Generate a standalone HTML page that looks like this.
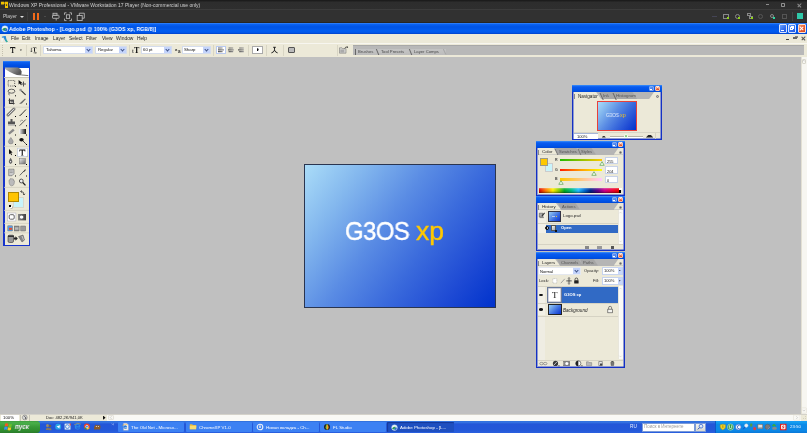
<!DOCTYPE html>
<html><head><meta charset="utf-8">
<style>
*{margin:0;padding:0;box-sizing:border-box}
html,body{width:807px;height:433px;overflow:hidden;background:#c0c0c0;font-family:"Liberation Sans",sans-serif}
.a{position:absolute}
.t{position:absolute;white-space:nowrap;line-height:1;will-change:transform}
#vmt{left:0;top:0;width:807px;height:9px;background:linear-gradient(#1c1c1c 0,#1c1c1c 10%,#2d2d2d 22%,#2e2e2e 100%)}
#vmb{left:0;top:9px;width:807px;height:14px;background:linear-gradient(#3c3c3c 0,#3c3c3c 7%,#313131 10%,#313131 90%,#262626 95%)}
#xpt{left:0;top:23px;width:807px;height:11px;background:linear-gradient(#3a8cff 0,#0a62f2 12%,#0054e6 35%,#005cf0 70%,#0058ec 85%,#0040c8 100%)}
#menu{left:0;top:34px;width:807px;height:9px;background:#ece9d8}
#opt{left:0;top:43px;width:807px;height:14px;background:#ece9d8}
#ws{left:0;top:57px;width:801px;height:357px;background:#c0c0c0}
#vsb{left:801px;top:57px;width:6px;height:357px;background:#f4f3ee}
#status{left:0;top:414px;width:807px;height:7px;background:#ece9d8}
#task{left:0;top:421px;width:807px;height:12px;background:linear-gradient(#2a6ad8 0,#3a7ae4 8%,#2456d8 25%,#2358d8 75%,#2a60e0 100%)}
.vm{color:#cfcfcf;font-size:5px}
.mn{color:#1a1a1a;font-size:4.9px;top:36.7px}
.ob{font-size:4.3px;color:#111}
.dd{position:absolute;background:#fff;border:0.6px solid #d4dcec;height:8px}
.dda{position:absolute;background:#c4d4fb;width:6.6px;height:6.8px;top:0;right:0}
.dda:after{content:"";position:absolute;left:2px;top:1.6px;width:2px;height:2px;border-right:1.1px solid #3d5185;border-bottom:1.1px solid #3d5185;transform:rotate(45deg)}
.sep{position:absolute;top:44.5px;width:0.8px;height:11.5px;background:#d8d5c4}
.pal{position:absolute;background:#ece9d8;border:1px solid #0831d9;border-top:none}
.ptb{position:absolute;left:-1px;right:-1px;top:0;height:7px;background:linear-gradient(#3b8cf6 0,#0058ee 25%,#0052e6 70%,#0046d0 100%)}
.pbt{position:absolute;top:1px;width:5px;height:5px;border:1px solid #fff;border-radius:1px}
.tabs{position:absolute;left:1px;right:1px;height:6px;background:#b4b4b4}
.tab{position:absolute;top:0;height:6px;font-size:4px;line-height:6px;color:#333;padding-left:2px}
.tab.on{background:#ece9d8;color:#000}
.task{position:absolute;top:422px;height:10px;border-radius:1px;background:#3c81f3;color:#fff;font-size:4.4px;line-height:12.3px;padding-left:13px;white-space:nowrap;overflow:hidden;will-change:transform}
</style></head><body>
<div id="vmt" class="a"></div>
<div id="vmb" class="a"></div>
<div id="xpt" class="a"></div>
<div id="menu" class="a"></div>
<div id="opt" class="a"></div>
<div class="a" style="left:0;top:42.6px;width:807px;height:0.8px;background:#f7f6f0"></div>
<div id="ws" class="a"></div>
<div id="vsb" class="a"></div>
<div id="status" class="a"></div>
<div id="task" class="a"></div>
<!-- VMware title -->
<svg class="a" style="left:0;top:0" width="9" height="9" viewBox="0 0 9 9"><path d="M1 1.8h3v2.6h-3z M3.8 2.6h1.5v1h-1.5z M5 1.8h3v6.2h-3z" fill="#f0c000"/><rect x="5.9" y="4.3" width="1.2" height="1.6" fill="#3a3a20"/></svg>
<div class="t vm" style="left:9px;top:2.5px">Windows XP Professional - VMware Workstation 17 Player (Non-commercial use only)</div>
<div class="a" style="left:765.5px;top:4.3px;width:3px;height:0.8px;background:#8c8c8c"></div>
<div class="a" style="left:781px;top:3px;width:4px;height:4px;border:0.8px solid #909090;border-radius:0.8px"></div>
<div class="a" style="left:796.5px;top:4.5px;width:4.5px;height:0.7px;background:#8c8c8c;transform:rotate(45deg)"></div>
<div class="a" style="left:796.5px;top:4.5px;width:4.5px;height:0.7px;background:#8c8c8c;transform:rotate(-45deg)"></div>
<!-- VMware toolbar -->
<div class="t vm" style="left:3px;top:14.6px;font-size:4.9px">Player</div>
<div class="a" style="left:20px;top:16px;width:0;height:0;border-left:2px solid transparent;border-right:2px solid transparent;border-top:2px solid #ddd"></div>
<div class="a" style="left:27px;top:12px;width:1px;height:9px;background:#3d3d3d"></div>
<div class="a" style="left:33px;top:13px;width:2px;height:7px;background:#f26a1a"></div>
<div class="a" style="left:37px;top:13px;width:2px;height:7px;background:#f26a1a"></div>
<div class="a" style="left:44px;top:15.5px;width:0;height:0;border-left:1.5px solid transparent;border-right:1.5px solid transparent;border-top:1.5px solid #666"></div>
<svg class="a" style="left:50px;top:11px" width="40" height="12" viewBox="0 0 40 12">
<g fill="none" stroke="#b4b4b4" stroke-width="0.9">
<rect x="3" y="2.3" width="4" height="2"/>
<rect x="2.5" y="4.3" width="6.5" height="3" rx="0.5"/>
<path d="M6.2 7.3v2.2"/>
<path d="M14.5 3.8v-2h2 M19.5 1.8h2v2 M21.5 7.6v2h-2 M16.5 9.6h-2v-2"/>
<rect x="16.4" y="3.8" width="3.2" height="3.6"/>
<path d="M29.3 4.5v-2.3h5v5h-2.2"/>
<rect x="27.2" y="4.5" width="5" height="5"/>
</g></svg>
<!-- VMware toolbar right icons -->
<div class="a" style="left:712px;top:16px;width:5px;height:1px;background:#445"></div>
<div class="a" style="left:723px;top:13.5px;width:6px;height:5px;border:1px solid #888"></div>
<div class="a" style="left:727px;top:17px;width:2px;height:2px;background:#8ed11a"></div>
<div class="a" style="left:734.5px;top:13.5px;width:5px;height:5px;border:1px solid #888;border-radius:50%"></div>
<div class="a" style="left:738px;top:17px;width:2px;height:2px;background:#8ed11a"></div>
<div class="a" style="left:747px;top:13px;width:4px;height:3px;border:1px solid #888"></div>
<div class="a" style="left:749px;top:15.5px;width:4px;height:3px;border:1px solid #888"></div>
<div class="a" style="left:751px;top:17px;width:2px;height:2px;background:#8ed11a"></div>
<div class="a" style="left:758px;top:13.5px;width:5px;height:5px;border:1px solid #555;border-radius:50%"></div>
<div class="a" style="left:770px;top:13.5px;width:4px;height:4px;border:1px solid #888;border-radius:50%"></div>
<div class="a" style="left:772.5px;top:17px;width:2px;height:2px;background:#2cd6a0"></div>
<div class="a" style="left:782px;top:13.5px;width:5px;height:5px;border:1px solid #555"></div>
<div class="a" style="left:792px;top:12px;width:1px;height:9px;background:#444"></div>
<div class="a" style="left:797px;top:13px;width:6px;height:6px;background:#2fc8a8"></div>
<!-- XP title -->
<svg class="a" style="left:0.5px;top:24.8px" width="8" height="8" viewBox="0 0 8 8"><circle cx="3.9" cy="3.8" r="3.1" fill="#e8f2f8" stroke="#a8c8e0" stroke-width="0.4"/><path d="M1.2 4.6q1.6-2.6 4.6-1.4-1.4 0.2-2.2 2.8-1.2-0.3-2.4-1.4z" fill="#2a9a5a"/><path d="M3.4 5.9q0.9-2.4 2.6-2.6 0.8 1.6-0.4 3z" fill="#2a6ac8"/></svg>
<div class="t" style="left:9px;top:26.6px;font-size:5.9px;font-weight:bold;color:#fff;letter-spacing:0.12px;transform:scaleX(0.875);transform-origin:0 0">Adobe Photoshop - [Logo.psd @ 100% (G3OS xp, RGB/8)]</div>
<div class="a" style="left:778.5px;top:24.3px;width:8.3px;height:8.5px;border:0.6px solid #d8e4ff;border-radius:1px;background:linear-gradient(135deg,#6aa4ff,#2f6cf0 60%,#2258e0)"></div>
<div class="a" style="left:781px;top:29.8px;width:3px;height:1px;background:#fff"></div>
<div class="a" style="left:788px;top:24.3px;width:8.3px;height:8.5px;border:0.6px solid #d8e4ff;border-radius:1px;background:linear-gradient(135deg,#6aa4ff,#2f6cf0 60%,#2258e0)"></div>
<div class="a" style="left:790.3px;top:27px;width:3px;height:3px;border:0.8px solid #fff"></div>
<div class="a" style="left:791.3px;top:26px;width:3px;height:3px;border-top:0.8px solid #fff;border-right:0.8px solid #fff"></div>
<div class="a" style="left:797.5px;top:24.3px;width:8.5px;height:8.5px;border:0.6px solid #ffe0d0;border-radius:1px;background:linear-gradient(135deg,#f39a70,#e85a30 55%,#d84a20)"></div>
<div class="a" style="left:799.2px;top:28.2px;width:5.2px;height:1px;background:#fff;transform:rotate(45deg)"></div>
<div class="a" style="left:799.2px;top:28.2px;width:5.2px;height:1px;background:#fff;transform:rotate(-45deg)"></div>
<!-- menu -->
<svg class="a" style="left:0;top:34px" width="10" height="9" viewBox="0 0 10 9"><path d="M1.8 2.8q1.5-1 4-0.8l0.6 3.2 1.4 2.6-1.6 0.4-1.6-2.4-1-2.2-1.6 0.2z" fill="#2a8ad8"/><path d="M5.2 4.6l1.2 1.4 1.3 1.8-1.3 0.4z" fill="#3ac08a"/><path d="M1.6 4.2l1.4 0.4-0.6 3.2h-1z" fill="#f4f8fc"/></svg>
<div class="t mn" style="left:11px">File</div>
<div class="t mn" style="left:22px">Edit</div>
<div class="t mn" style="left:35px">Image</div>
<div class="t mn" style="left:53px">Layer</div>
<div class="t mn" style="left:69px">Select</div>
<div class="t mn" style="left:86px">Filter</div>
<div class="t mn" style="left:101.5px">View</div>
<div class="t mn" style="left:116px">Window</div>
<div class="t mn" style="left:137px">Help</div>
<div class="a" style="left:786px;top:39.2px;width:3px;height:0.9px;background:#444"></div>
<div class="a" style="left:793.3px;top:36.5px;width:3.5px;height:2.7px;border:0.6px solid #666;border-top-width:0.9px"></div>
<div class="a" style="left:794.5px;top:35.7px;width:3px;height:2.5px;border-top:0.6px solid #888;border-right:0.6px solid #888"></div>
<div class="a" style="left:800.8px;top:37.8px;width:4.6px;height:0.8px;background:#555;transform:rotate(45deg)"></div>
<div class="a" style="left:800.8px;top:37.8px;width:4.6px;height:0.8px;background:#555;transform:rotate(-45deg)"></div>
<!-- options bar -->
<div class="a" style="left:2px;top:44.5px;width:1px;height:11.5px;border-left:0.8px dotted #c4c0ae"></div>
<svg class="a" style="left:8px;top:45px" width="32" height="10" viewBox="8 45 32 10">
<path d="M10.1 47.1h5.2v1.6h-0.5l-0.3-0.8h-1.35v4.5l0.7 0.25v0.4h-2.4v-0.4l0.7-0.25v-4.5h-1.35l-0.3 0.8h-0.4z" fill="#1a1a1a"/>
<path d="M19.9 49.5h2l-1 1.5z" fill="#333"/>
<path d="M32.8 47.5h3.6v1.1h-0.3l-0.2-0.5h-0.9v3.6h-1v-3.6h-0.9l-0.2 0.5h-0.1z" fill="#222"/>
<path d="M31.4 47.8v3.8 M30.6 50.9l0.8 1 0.8-1" fill="none" stroke="#222" stroke-width="0.6"/>
<path d="M33.5 52.8h2.6 M35.6 52.2l0.8 0.6-0.8 0.6" fill="none" stroke="#222" stroke-width="0.6"/>
</svg>
<div class="sep" style="left:26px"></div>
<div class="sep" style="left:40px"></div>
<div class="dd" style="left:43px;top:45.5px;width:49.5px"><span class="t ob" style="left:1.8px;top:1.7px">Tahoma</span><div class="dda"></div></div>
<div class="dd" style="left:95px;top:45.5px;width:32px"><span class="t ob" style="left:1.8px;top:1.7px">Regular</span><div class="dda"></div></div>
<div class="sep" style="left:129px"></div>
<div class="t" style="left:133.8px;top:46.6px;font-family:'Liberation Serif',serif;font-size:8px;color:#111;font-weight:bold">T</div>
<div class="t" style="left:131.8px;top:49px;font-family:'Liberation Serif',serif;font-size:5.2px;color:#444;font-weight:bold">t</div>
<div class="dd" style="left:140.5px;top:45.5px;width:31px"><span class="t ob" style="left:1.8px;top:1.7px">60 pt</span><div class="dda"></div></div>
<div class="t" style="left:174.6px;top:48.4px;font-size:4.2px;color:#333;font-weight:bold">a</div><div class="t" style="left:177.6px;top:49.6px;font-size:4.6px;color:#333;font-weight:bold">a</div>
<div class="dd" style="left:181.5px;top:45.5px;width:29px"><span class="t ob" style="left:1.8px;top:1.7px">Sharp</span><div class="dda"></div></div>
<div class="sep" style="left:212.5px"></div>
<div class="a" style="left:216px;top:46px;width:9.5px;height:8px;border:1px solid #b9c9ef;background:#fff"></div>
<svg class="a" style="left:216px;top:46px" width="30" height="8" viewBox="216 46 30 8">
<defs><linearGradient id="alg" x1="0" y1="0" x2="1" y2="0"><stop offset="0" stop-color="#555"/><stop offset="1" stop-color="#999"/></linearGradient></defs>
<path d="M218 47.4h4.6v1.2h-4.6z M218 49.2h6v1.2h-6z M218 51h4.6v1.3h-4.6z" fill="url(#alg)"/>
<path d="M228.6 47.4h4.6v1.2h-4.6z M228 49.2h5.8v1.2h-5.8z M228.6 51h4.6v1.3h-4.6z" fill="url(#alg)"/>
<path d="M239.2 47.4h4.6v1.2h-4.6z M238 49.2h5.8v1.2h-5.8z M239.2 51h4.6v1.3h-4.6z" fill="url(#alg)"/>
</svg>
<div class="sep" style="left:248px"></div>
<div class="a" style="left:252px;top:46.3px;width:11px;height:7.5px;border:1px solid #aaa;background:#fff"></div>
<div class="a" style="left:257px;top:48px;width:1.8px;height:3px;background:#111;clip-path:polygon(0 0,100% 30%,60% 100%,0 100%)"></div>
<div class="sep" style="left:265.5px"></div>
<svg class="a" style="left:270px;top:46px" width="10" height="8" viewBox="270 46 10 8"><path d="M273.2 47.3h2.6 M274.5 47.3v2.5q0 1.5-1.5 2.3l-1.6 0.8 M274.5 49.8q0 1.5 1.5 2.3l1.6 0.8" fill="none" stroke="#222" stroke-width="1"/></svg>
<div class="sep" style="left:282.5px"></div>
<div class="a" style="left:288px;top:46.5px;width:6.5px;height:6.5px;border:1px solid #555;border-radius:1px;background:#bbb"></div>
<div class="sep" style="left:336.5px"></div>
<svg class="a" style="left:338px;top:45px" width="12" height="10" viewBox="338 45 12 10"><path d="M339.5 47.8h2.5l0.6 0.8h3.4v4.6h-6.5z" fill="#d8d8d4" stroke="#666" stroke-width="0.5"/><path d="M340.3 49.5h4v3.2h-4z" fill="#aaa"/><path d="M344.6 48.3q1.2-2 3-1.2" fill="none" stroke="#222" stroke-width="0.7"/><path d="M347 46.3l1.2 0.9-1.3 0.7z" fill="#222"/></svg>
<!-- palette well -->
<div class="a" style="left:353px;top:45px;width:451px;height:10px;background:#b8b8b8;border-top:1px solid #a8a8a8"></div>
<div class="a" style="left:355px;top:49px;width:0.9px;height:5.5px;background:#666"></div>
<div class="a" style="left:356px;top:48.8px;width:90px;height:5.8px;background:linear-gradient(#c4c4c4,#bcbcbc)"></div>
<div class="t" style="left:358px;top:50.2px;font-size:4.2px;color:#4a4a4a">Brushes</div>
<div class="a" style="left:377px;top:48.8px;width:0.9px;height:5.8px;background:#666;transform:skewX(22deg)"></div>
<div class="t" style="left:380.5px;top:50.2px;font-size:4.2px;color:#4a4a4a">Tool Presets</div>
<div class="a" style="left:410px;top:48.8px;width:0.9px;height:5.8px;background:#666;transform:skewX(22deg)"></div>
<div class="t" style="left:414px;top:50.2px;font-size:4.2px;color:#4a4a4a">Layer Comps</div>
<div class="a" style="left:442.5px;top:48.8px;width:4px;height:5.8px;background:#a8a8a8;clip-path:polygon(0 0,30% 0,100% 100%,70% 100%)"></div>
<div class="a" style="left:801px;top:57px;width:6px;height:357px;background:#f7f6f1;border-left:1px solid #e3e0d4"></div>
<div class="a" style="left:802px;top:59px;width:4px;height:5px;border:1px solid #d8d6cc;border-radius:1px"></div>
<!-- toolbox -->
<div class="a" style="left:3px;top:61px;width:27px;height:185px;background:#ece9d8;border:1.4px solid #1634cc;border-left-width:2px;border-top:none"></div>
<div class="a" style="left:3px;top:60.5px;width:27px;height:7px;background:linear-gradient(#3a8af8 0,#0a5ef0 20%,#0050e4 60%,#0048d8 100%)"></div>
<div class="a" style="left:5px;top:67.5px;width:23.6px;height:9.5px;background:#fff"></div>
<svg class="a" style="left:0;top:60px" width="36" height="20" viewBox="0 60 36 20">
<defs><linearGradient id="fth" x1="0" y1="0" x2="1" y2="0.4"><stop offset="0" stop-color="#b8b8b8"/><stop offset="0.5" stop-color="#8a8a8a"/><stop offset="1" stop-color="#555"/></linearGradient></defs>
<path d="M5 67.6h13q3 1.2 3.6 4q0.3 2.2-1 3.6q-3 0.3-6.5-1.2q-5-2.2-9.1-5z" fill="url(#fth)"/>
<path d="M17 73.8q4 1.5 11.3 1.8" fill="none" stroke="#666" stroke-width="0.9"/>
</svg>
<div class="a" style="left:4px;top:77px;width:25px;height:1px;background:#c9c6b6"></div>
<div id="tools"></div>
<!-- canvas -->
<div class="a" style="left:304px;top:164px;width:192px;height:144px;border:1px solid #2a3550;background:linear-gradient(127deg,#aadcf8 0%,#84b8ee 20%,#5a8ce4 42%,#3a6adc 62%,#1e4ad4 82%,#0032cc 100%)"></div>
<div class="t" style="left:345px;top:218.7px;font-size:25.5px;color:#fff;letter-spacing:-0.5px;-webkit-text-stroke:0.4px #fff;transform:scaleX(0.935);transform-origin:0 0">G3OS</div>
<div class="t" style="left:415.5px;top:219px;font-size:25.5px;color:#ffc800;-webkit-text-stroke:0.4px #ffc800;transform:scaleX(1.04);transform-origin:0 0">xp</div>
<!-- Navigator palette -->
<div class="a" style="left:572px;top:85px;width:90px;height:55px;background:#ece9d8;border:1px solid #1430c4;border-top:none;box-shadow:inset 1px -1px 0 rgba(30,60,200,0.45),inset -1px 0 0 rgba(30,60,200,0.45)"></div>
<div class="a" style="left:572px;top:85px;width:90px;height:7px;background:linear-gradient(#3d93fb 0,#0a5cf0 25%,#0054e8 70%,#0048d8 100%)"></div>
<div class="a" style="left:648.5px;top:85.8px;width:5px;height:5.5px;border:0.5px solid #80a8f0;border-radius:1px;background:linear-gradient(135deg,#6aa0f8,#3a70e8)"></div>
<div class="a" style="left:650px;top:88.5px;width:2px;height:1px;background:#fff"></div>
<div class="a" style="left:655px;top:85.8px;width:5px;height:5.5px;border:0.5px solid #ffc0a0;border-radius:1px;background:linear-gradient(135deg,#f08a60,#d84a28)"></div>
<div class="t" style="left:655.8px;top:85.3px;font-size:5.5px;font-weight:bold;color:#fff">×</div>
<div class="a" style="left:574px;top:92px;width:86px;height:7px;background:#b5b5b5"></div>
<div class="a" style="left:574px;top:92px;width:27px;height:7px;background:#ece9d8;clip-path:polygon(0 0,82% 0,100% 100%,0 100%)"></div>
<div class="a" style="left:574px;top:93.5px;width:1px;height:5px;background:#888"></div>
<div class="t" style="left:577.8px;top:94.5px;font-size:4.65px;color:#222">Navigator</div>
<div class="a" style="left:600px;top:92px;width:10px;height:7px;background:#a6a6a6;clip-path:polygon(0 0,75% 0,100% 100%,25% 100%)"></div>
<div class="t" style="left:603px;top:94.3px;font-size:4.3px;color:#555">Info</div>
<div class="a" style="left:607px;top:92px;width:30px;height:7px;background:#a6a6a6;clip-path:polygon(0 0,85% 0,100% 100%,10% 100%)"></div>
<div class="t" style="left:615.5px;top:94.3px;font-size:4.4px;color:#555">Histogram</div>
<div class="a" style="left:636px;top:92px;width:24px;height:7px;background:#ece9d8;clip-path:polygon(75% 0,100% 0,100% 100%,55% 100%)"></div>
<div class="a" style="left:656px;top:95px;width:3px;height:3px;border-radius:50%;background:#bbb;border:0.5px solid #777"></div>
<div class="a" style="left:601px;top:92.5px;width:0.9px;height:6.5px;background:#666;transform:skewX(25deg)"></div>
<div class="a" style="left:613.5px;top:92.5px;width:0.9px;height:6.5px;background:#666;transform:skewX(25deg)"></div>
<div class="a" style="left:597px;top:101px;width:40px;height:30px;border:1px solid #e8403a;background:linear-gradient(127deg,#aadcf8 0%,#84b8ee 20%,#5a8ce4 42%,#3a6adc 62%,#1e4ad4 82%,#0032cc 100%)"></div>
<div class="t" style="left:606.2px;top:112.6px;font-size:5.2px;color:#e6f0ff;transform:scaleX(0.9);transform-origin:0 0">G3OS</div>
<div class="t" style="left:620.1px;top:112.6px;font-size:5.4px;color:#f0c020">xp</div>
<div class="a" style="left:574px;top:132px;width:86px;height:1px;background:#d8d5c6"></div>
<div class="a" style="left:574px;top:133px;width:24px;height:5.5px;background:#fff;border-top:1px solid #a5b5d8"></div>
<div class="t" style="left:576.8px;top:134.7px;font-size:4.1px;color:#222">100%</div>
<div class="a" style="left:601.8px;top:135.8px;width:4px;height:1.8px;background:#333;clip-path:polygon(35% 0,65% 0,100% 100%,0 100%)"></div>
<div class="a" style="left:610.4px;top:136.2px;width:33px;height:0.8px;background:#b8b5a6"></div>
<div class="a" style="left:610.4px;top:137px;width:33px;height:0.6px;background:#fff"></div>
<div class="a" style="left:624.3px;top:134.3px;width:4px;height:3.8px;background:#86c47a;border:0.7px solid #f4fff0;border-radius:50% 50% 40% 40%"></div>
<div class="a" style="left:645.9px;top:134.7px;width:7.4px;height:2.9px;background:#222;clip-path:polygon(35% 0,65% 0,100% 100%,0 100%)"></div>
<div class="a" style="left:655px;top:133px;width:0.8px;height:5.5px;background:#d6d3c4"></div>

<!-- Color palette -->
<div class="a" style="left:536px;top:141px;width:89px;height:55px;background:#ece9d8;border:1px solid #1430c4;border-top:none;box-shadow:inset 1px -1px 0 rgba(30,60,200,0.45),inset -1px 0 0 rgba(30,60,200,0.45)"></div>
<div class="a" style="left:536px;top:141px;width:89px;height:7px;background:linear-gradient(#3d93fb 0,#0a5cf0 25%,#0054e8 70%,#0048d8 100%)"></div>
<div class="a" style="left:611.5px;top:141.8px;width:5px;height:5.5px;border:0.5px solid #80a8f0;border-radius:1px;background:linear-gradient(135deg,#6aa0f8,#3a70e8)"></div>
<div class="a" style="left:613px;top:144.5px;width:2px;height:1px;background:#fff"></div>
<div class="a" style="left:618px;top:141.8px;width:5px;height:5.5px;border:0.5px solid #ffc0a0;border-radius:1px;background:linear-gradient(135deg,#f08a60,#d84a28)"></div>
<div class="t" style="left:618.8px;top:141.3px;font-size:5.5px;font-weight:bold;color:#fff">×</div>
<div class="a" style="left:538px;top:148px;width:85px;height:6.5px;background:#b5b5b5"></div>
<div class="a" style="left:538px;top:148px;width:20px;height:6.5px;background:#ece9d8;clip-path:polygon(0 0,78% 0,100% 100%,0 100%)"></div>
<div class="a" style="left:538px;top:149.5px;width:1px;height:5px;background:#888"></div>
<div class="t" style="left:541.5px;top:149.8px;font-size:4.4px;color:#222">Color</div>
<div class="a" style="left:555px;top:148px;width:26px;height:6.5px;background:#a6a6a6;clip-path:polygon(0 0,82% 0,100% 100%,12% 100%)"></div>
<div class="t" style="left:559px;top:149.8px;font-size:4.1px;color:#555">Swatches</div>
<div class="a" style="left:578px;top:148px;width:18px;height:6.5px;background:#a6a6a6;clip-path:polygon(0 0,75% 0,100% 100%,15% 100%)"></div>
<div class="t" style="left:581px;top:149.8px;font-size:4.1px;color:#555">Styles</div>
<div class="a" style="left:600px;top:148px;width:23px;height:6.5px;background:#ece9d8;clip-path:polygon(80% 0,100% 0,100% 100%,60% 100%)"></div>
<div class="a" style="left:619px;top:151px;width:3.4px;height:3.4px;border-radius:50%;background:#d8d8d0;border:0.5px solid #888"></div><div class="a" style="left:620.2px;top:calc(151px + 1px);width:1.2px;height:1.4px;background:#222;clip-path:polygon(0 0,100% 50%,0 100%)"></div>
<div class="a" style="left:544.5px;top:163px;width:8px;height:8.5px;background:#c9f4fb;border:0.5px solid #ccc"></div>
<div class="a" style="left:540px;top:158px;width:8px;height:8px;background:#ffc800;border:1px solid #9a9a8a"></div>
<div class="t" style="left:554.5px;top:159.2px;font-size:3.6px;color:#444;font-weight:bold">R</div>
<div class="a" style="left:560px;top:158.5px;width:42px;height:2.5px;background:linear-gradient(90deg,#20b800,#ffc800)"></div>
<svg class="a" style="left:599px;top:160.5px" width="6" height="5" viewBox="0 0 6 5"><path d="M3 0.7l2.2 3.6h-4.4z" fill="#f4fff0" stroke="#5aa050" stroke-width="0.7"/></svg>
<div class="a" style="left:604.5px;top:156.5px;width:13.5px;height:7.5px;background:#fff;border:1px solid #c7d2e8"></div>
<div class="t" style="left:606.5px;top:160.1px;font-size:3.9px;color:#222">255</div>
<div class="t" style="left:554.5px;top:168.6px;font-size:3.6px;color:#444;font-weight:bold">G</div>
<div class="a" style="left:560px;top:168.5px;width:42px;height:2.5px;background:linear-gradient(90deg,#ff1a00,#ffa000 50%,#ffff00)"></div>
<svg class="a" style="left:591px;top:170.5px" width="6" height="5" viewBox="0 0 6 5"><path d="M3 0.7l2.2 3.6h-4.4z" fill="#f4fff0" stroke="#5aa050" stroke-width="0.7"/></svg>
<div class="a" style="left:604.5px;top:166px;width:13.5px;height:7.5px;background:#fff;border:1px solid #c7d2e8"></div>
<div class="t" style="left:606.5px;top:169.7px;font-size:3.9px;color:#222">204</div>
<div class="t" style="left:554.5px;top:178.3px;font-size:3.6px;color:#444;font-weight:bold">B</div>
<div class="a" style="left:560px;top:178px;width:42px;height:2.5px;background:linear-gradient(90deg,#ffc800,#ffc8ff)"></div>
<svg class="a" style="left:557.5px;top:179.8px" width="6" height="5" viewBox="0 0 6 5"><path d="M3 0.7l2.2 3.6h-4.4z" fill="#f4fff0" stroke="#5aa050" stroke-width="0.7"/></svg>
<div class="a" style="left:604.5px;top:175.5px;width:13.5px;height:7.5px;background:#fff;border:1px solid #c7d2e8"></div>
<div class="t" style="left:606.5px;top:179.1px;font-size:3.9px;color:#222">0</div>
<div class="a" style="left:539px;top:188px;width:82px;height:5px;background:linear-gradient(90deg,#d00 0,#f70 8%,#fe0 17%,#8c0 24%,#0a2 31%,#0b8 40%,#2bf 48%,#06c 56%,#028 63%,#608 72%,#c08 80%,#e03 90%,#e00 97%,#000 97%)"></div>
<div class="a" style="left:539px;top:188px;width:82px;height:5px;background:linear-gradient(rgba(255,255,255,0.35),rgba(255,255,255,0) 40%,rgba(0,0,0,0) 60%,rgba(0,0,0,0.45))"></div>
<div class="a" style="left:619px;top:188px;width:2.5px;height:2px;background:#fff"></div>

<div class="a" style="left:555.5px;top:148.5px;width:0.9px;height:6px;background:#777;transform:skewX(25deg)"></div>
<div class="a" style="left:578.5px;top:148.5px;width:0.9px;height:6px;background:#777;transform:skewX(25deg)"></div>
<div class="a" style="left:558.5px;top:203.5px;width:0.9px;height:6px;background:#777;transform:skewX(25deg)"></div>
<div class="a" style="left:557.5px;top:259.5px;width:0.9px;height:6px;background:#777;transform:skewX(25deg)"></div>
<div class="a" style="left:580.5px;top:259.5px;width:0.9px;height:6px;background:#777;transform:skewX(25deg)"></div>
<!-- History palette -->
<div class="a" style="left:536px;top:196px;width:89px;height:55px;background:#ece9d8;border:1px solid #1430c4;border-top:none;box-shadow:inset 1px -1px 0 rgba(30,60,200,0.45),inset -1px 0 0 rgba(30,60,200,0.45)"></div>
<div class="a" style="left:536px;top:196px;width:89px;height:7px;background:linear-gradient(#3d93fb 0,#0a5cf0 25%,#0054e8 70%,#0048d8 100%)"></div>
<div class="a" style="left:611.5px;top:196.8px;width:5px;height:5.5px;border:0.5px solid #80a8f0;border-radius:1px;background:linear-gradient(135deg,#6aa0f8,#3a70e8)"></div>
<div class="a" style="left:613px;top:199.5px;width:2px;height:1px;background:#fff"></div>
<div class="a" style="left:618px;top:196.8px;width:5px;height:5.5px;border:0.5px solid #ffc0a0;border-radius:1px;background:linear-gradient(135deg,#f08a60,#d84a28)"></div>
<div class="t" style="left:618.8px;top:196.3px;font-size:5.5px;font-weight:bold;color:#fff">×</div>
<div class="a" style="left:538px;top:203px;width:85px;height:6.5px;background:#b5b5b5"></div>
<div class="a" style="left:538px;top:203px;width:23px;height:6.5px;background:#ece9d8;clip-path:polygon(0 0,78% 0,100% 100%,0 100%)"></div>
<div class="a" style="left:538px;top:204.5px;width:1px;height:5px;background:#888"></div>
<div class="t" style="left:541.5px;top:204.8px;font-size:4.4px;color:#222">History</div>
<div class="a" style="left:558px;top:203px;width:22px;height:6.5px;background:#a6a6a6;clip-path:polygon(0 0,80% 0,100% 100%,14% 100%)"></div>
<div class="t" style="left:562px;top:204.8px;font-size:4.1px;color:#555">Actions</div>
<div class="a" style="left:600px;top:203px;width:23px;height:6.5px;background:#ece9d8;clip-path:polygon(80% 0,100% 0,100% 100%,60% 100%)"></div>
<div class="a" style="left:619px;top:206px;width:3.4px;height:3.4px;border-radius:50%;background:#d8d8d0;border:0.5px solid #888"></div><div class="a" style="left:620.2px;top:calc(206px + 1px);width:1.2px;height:1.4px;background:#222;clip-path:polygon(0 0,100% 50%,0 100%)"></div>
<div class="a" style="left:538px;top:209.5px;width:8px;height:13px;background:#f2f0e6"></div>
<svg class="a" style="left:538px;top:210px" width="8" height="11" viewBox="538 210 8 11"><path d="M539.3 213.2h3.6v3.8h-3.6z" fill="#aaa" stroke="#444" stroke-width="0.5"/><path d="M541.5 215.5l2.8-3 0.7 0.7-2.6 3.1z" fill="#333"/><path d="M539.6 217.6h4.4" stroke="#666" stroke-width="0.7"/></svg>
<div class="a" style="left:548px;top:211px;width:13px;height:10.5px;border:1px solid #334;background:linear-gradient(135deg,#9ccff4,#3a6ce0 60%,#0a34cf)"></div>
<div class="a" style="left:551.5px;top:215.5px;width:3.5px;height:1px;background:#c8d8f8;opacity:0.8"></div><div class="a" style="left:555.5px;top:215.5px;width:1.2px;height:1.2px;background:#e8c030"></div>
<div class="t" style="left:563px;top:214px;font-size:4.3px;color:#222">Logo.psd</div>
<div class="a" style="left:538px;top:223px;width:80px;height:1px;background:#d6d3c4"></div>
<div class="a" style="left:546px;top:224.5px;width:71.5px;height:8px;background:#316ac5"></div>
<div class="a" style="left:538px;top:223.5px;width:8px;height:9px;background:#f3f1e8"></div>
<div class="a" style="left:544.6px;top:226.3px;width:4px;height:4px;border-radius:50%;background:linear-gradient(90deg,#111 50%,#fff 50%);border:0.6px solid #111"></div>
<div class="a" style="left:550.8px;top:225.2px;width:5.4px;height:6px;background:linear-gradient(135deg,#f4f4f4,#a8a8a8);border:0.5px solid #555"></div>
<div class="a" style="left:554.5px;top:229.5px;width:2px;height:2px;background:#111"></div>
<div class="t" style="left:561px;top:226px;font-size:4.1px;color:#fff;font-weight:bold">Open</div>
<div class="a" style="left:618px;top:209.5px;width:5px;height:34px;background:#fbfbf8;border-left:0.5px solid #e8e6dc"></div><svg class="a" style="left:618px;top:210px" width="5" height="34" viewBox="0 0 5 34"><path d="M1.3 3.3l1.2-1.2 1.2 1.2 M1.3 30.7l1.2 1.2 1.2-1.2" fill="none" stroke="#c8c8c0" stroke-width="0.5"/></svg>
<div class="a" style="left:538px;top:243.5px;width:85px;height:1px;background:#d6d3c4"></div>
<div class="a" style="left:585px;top:245.5px;width:4px;height:3.5px;background:#888"></div>
<div class="a" style="left:597px;top:245.5px;width:5px;height:3.5px;background:#999"></div>
<div class="a" style="left:611px;top:245.5px;width:3px;height:3.5px;background:#555"></div>

<!-- Layers palette -->
<div class="a" style="left:536px;top:252px;width:89px;height:116px;background:#ece9d8;border:1px solid #1430c4;border-top:none;box-shadow:inset 1px -1px 0 rgba(30,60,200,0.45),inset -1px 0 0 rgba(30,60,200,0.45)"></div>
<div class="a" style="left:536px;top:252px;width:89px;height:7px;background:linear-gradient(#3d93fb 0,#0a5cf0 25%,#0054e8 70%,#0048d8 100%)"></div>
<div class="a" style="left:611.5px;top:252.8px;width:5px;height:5.5px;border:0.5px solid #80a8f0;border-radius:1px;background:linear-gradient(135deg,#6aa0f8,#3a70e8)"></div>
<div class="a" style="left:613px;top:255.5px;width:2px;height:1px;background:#fff"></div>
<div class="a" style="left:618px;top:252.8px;width:5px;height:5.5px;border:0.5px solid #ffc0a0;border-radius:1px;background:linear-gradient(135deg,#f08a60,#d84a28)"></div>
<div class="t" style="left:618.8px;top:252.3px;font-size:5.5px;font-weight:bold;color:#fff">×</div>
<div class="a" style="left:538px;top:259px;width:85px;height:6.5px;background:#b5b5b5"></div>
<div class="a" style="left:538px;top:259px;width:22px;height:6.5px;background:#ece9d8;clip-path:polygon(0 0,78% 0,100% 100%,0 100%)"></div>
<div class="a" style="left:538px;top:260.5px;width:1px;height:5px;background:#888"></div>
<div class="t" style="left:541.5px;top:260.8px;font-size:4.4px;color:#222">Layers</div>
<div class="a" style="left:557px;top:259px;width:26px;height:6.5px;background:#a6a6a6;clip-path:polygon(0 0,82% 0,100% 100%,12% 100%)"></div>
<div class="t" style="left:561px;top:260.8px;font-size:4.1px;color:#555">Channels</div>
<div class="a" style="left:580px;top:259px;width:18px;height:6.5px;background:#a6a6a6;clip-path:polygon(0 0,75% 0,100% 100%,15% 100%)"></div>
<div class="t" style="left:583px;top:260.8px;font-size:4.1px;color:#555">Paths</div>
<div class="a" style="left:600px;top:259px;width:23px;height:6.5px;background:#ece9d8;clip-path:polygon(80% 0,100% 0,100% 100%,60% 100%)"></div>
<div class="a" style="left:619px;top:262px;width:3.4px;height:3.4px;border-radius:50%;background:#d8d8d0;border:0.5px solid #888"></div><div class="a" style="left:620.2px;top:calc(262px + 1px);width:1.2px;height:1.4px;background:#222;clip-path:polygon(0 0,100% 50%,0 100%)"></div>
<div class="dd" style="left:538px;top:266.5px;width:43px;height:8px;border-color:#e4e8f0"><span class="t" style="left:0.5px;top:2px;font-size:4.1px;color:#111">Normal</span><div class="dda" style="height:6px"></div></div>
<div class="t" style="left:584px;top:268.6px;font-size:4.1px;color:#222">Opacity:</div>
<div class="a" style="left:601.5px;top:266.5px;width:21px;height:8px;background:#fff;border:1px solid #c6d3ee"></div>
<div class="a" style="left:617.5px;top:267px;width:4.5px;height:7px;background:#c6d6fb"></div>
<div class="a" style="left:619.3px;top:269.6px;width:1.3px;height:1.8px;background:#333;clip-path:polygon(0 0,100% 50%,0 100%)"></div>
<div class="t" style="left:604px;top:268.6px;font-size:4.1px;color:#222">100%</div>
<div class="t" style="left:539px;top:279px;font-size:4.2px;color:#222">Lock:</div>
<svg class="a" style="left:550px;top:276px" width="30" height="10" viewBox="550 276 30 10">
<rect x="552.8" y="278.6" width="4" height="4.4" fill="#fff" stroke="#999" stroke-width="0.5" stroke-dasharray="0.8 0.6"/>
<path d="M560.8 283.2l4-4.4" stroke="#999" stroke-width="0.9"/>
<path d="M569 278.2v5.4 M566.3 280.9h5.4" stroke="#444" stroke-width="0.9"/>
<path d="M567.7 278.5l1.3-1 1.3 1 M567.7 283.3l1.3 1 1.3-1" fill="none" stroke="#444" stroke-width="0.6"/>
<path d="M575 280.2v-0.8a1.4 1.4 0 0 1 2.8 0v0.8" fill="none" stroke="#222" stroke-width="0.7"/>
<rect x="574.2" y="280.2" width="4.4" height="3.4" rx="0.5" fill="#222"/>
</svg>
<div class="t" style="left:593px;top:278.7px;font-size:4.1px;color:#222">Fill:</div>
<div class="a" style="left:601.5px;top:277px;width:21px;height:7.5px;background:#fff;border:1px solid #c6d3ee"></div>
<div class="a" style="left:617.5px;top:277.5px;width:4.5px;height:6.5px;background:#c6d6fb"></div>
<div class="a" style="left:619.3px;top:279.8px;width:1.3px;height:1.8px;background:#333;clip-path:polygon(0 0,100% 50%,0 100%)"></div>
<div class="t" style="left:604px;top:278.8px;font-size:4.1px;color:#222">100%</div>
<div class="a" style="left:538px;top:285.5px;width:80px;height:1px;background:#d6d3c4"></div>
<div class="a" style="left:538px;top:287px;width:7px;height:28px;background:#f2f0e6"></div>
<div class="a" style="left:546.5px;top:287px;width:71px;height:15.5px;background:#316ac5"></div>
<div class="a" style="left:538.8px;top:293.6px;width:4.4px;height:2.8px;border-radius:50%;background:#111"></div>
<div class="a" style="left:547px;top:287px;width:15px;height:15.5px;background:#fff;border:1px solid #6a7a9a;box-shadow:inset 0 0 0 0.5px #aab"></div>
<div class="t" style="left:551.6px;top:291px;font-family:'Liberation Serif',serif;font-size:9px;color:#111">T</div>
<div class="t" style="left:563.5px;top:293px;font-size:4.1px;color:#fff;font-weight:bold">G3OS xp</div>
<div class="a" style="left:538px;top:302.5px;width:80px;height:1px;background:#d6d3c4"></div>
<div class="a" style="left:538.8px;top:308px;width:4.4px;height:2.8px;border-radius:50%;background:#111"></div>
<div class="a" style="left:548px;top:304px;width:13.5px;height:10.5px;border:1px solid #222;background:linear-gradient(135deg,#9ccff4,#3a6ce0 60%,#0a34cf)"></div>
<div class="t" style="left:563px;top:308.6px;font-size:4.6px;color:#222;font-style:italic">Background</div>
<svg class="a" style="left:606px;top:305px" width="8" height="9" viewBox="0 0 8 9"><path d="M2.6 4.2v-1.4a1.5 1.5 0 0 1 3 0v1.4" fill="none" stroke="#555" stroke-width="0.7"/><rect x="1.8" y="4.2" width="4.6" height="3.6" fill="#f4f4f0" stroke="#444" stroke-width="0.6"/></svg>
<div class="a" style="left:538px;top:316px;width:80px;height:1px;background:#d6d3c4"></div>
<div class="a" style="left:618px;top:286px;width:5px;height:73px;background:#fbfbf8;border-left:0.5px solid #e8e6dc"></div><svg class="a" style="left:618px;top:286px" width="5" height="73" viewBox="0 0 5 73"><path d="M1.3 3.3l1.2-1.2 1.2 1.2 M1.3 69.7l1.2 1.2 1.2-1.2" fill="none" stroke="#c8c8c0" stroke-width="0.5"/></svg>
<div class="a" style="left:538px;top:359.5px;width:85px;height:1px;background:#d6d3c4"></div>
<svg class="a" style="left:536px;top:358px" width="89" height="10" viewBox="536 358 89 10">
<g fill="none" stroke="#888" stroke-width="0.8"><ellipse cx="541.5" cy="363.6" rx="1.8" ry="1.2"/><ellipse cx="545.2" cy="363.6" rx="1.8" ry="1.2"/></g>
<circle cx="555.5" cy="363.4" r="2.6" fill="#3a3a3a"/><path d="M554 365l3-3.2" stroke="#ddd" stroke-width="0.8"/><rect x="558.5" y="365.3" width="0.9" height="0.9" fill="#000"/>
<rect x="563.8" y="361.2" width="6" height="4.6" fill="#8a8a8a" stroke="#555" stroke-width="0.4"/><circle cx="566.8" cy="363.5" r="1.5" fill="#fff"/>
<circle cx="578.3" cy="363.4" r="2.6" fill="#fff" stroke="#333" stroke-width="0.6"/><path d="M578.3 360.8a2.6 2.6 0 0 0 0 5.2z" fill="#222"/><rect x="581.5" y="365.3" width="0.9" height="0.9" fill="#000"/>
<path d="M586.5 361.8h2l0.6 0.8h2.6v3h-5.2z" fill="#b8b8b8" stroke="#666" stroke-width="0.4"/>
<path d="M598.8 361.5h3.5v4h-3.5z" fill="#eee" stroke="#444" stroke-width="0.5"/><path d="M600 363.5h2.3v2h-2.3z" fill="#444"/>
<path d="M610.8 362.3h3.2l-0.4 3.3h-2.4z" fill="#777" stroke="#333" stroke-width="0.4"/><rect x="611.3" y="361.2" width="2.2" height="0.8" fill="#333"/>
</svg>
<div class="a" style="left:538px;top:317px;width:7px;height:42.5px;background:#efede3"></div>
<!-- tools -->
<svg class="a" style="left:0;top:0" width="36" height="250" viewBox="0 0 36 250">
<defs>
<linearGradient id="gg" x1="0" y1="0" x2="1" y2="1"><stop offset="0" stop-color="#eee"/><stop offset="1" stop-color="#666"/></linearGradient>
<linearGradient id="gw" x1="0" y1="0" x2="1" y2="0"><stop offset="0" stop-color="#fff"/><stop offset="1" stop-color="#111"/></linearGradient>
</defs>
<g fill="#000">
<rect x="15" y="86" width="1" height="1"/><rect x="15" y="95.3" width="1" height="1"/><rect x="26" y="103.5" width="1" height="1"/>
<rect x="15" y="116" width="1" height="1"/><rect x="26" y="116" width="1" height="1"/>
<rect x="15" y="125.3" width="1" height="1"/><rect x="26" y="125.3" width="1" height="1"/>
<rect x="15" y="134.5" width="1" height="1"/><rect x="26" y="134.5" width="1" height="1"/>
<rect x="15" y="144" width="1" height="1"/><rect x="26" y="144" width="1" height="1"/>
<rect x="15" y="155" width="1" height="1"/><rect x="26.5" y="155.5" width="1" height="1"/>
<rect x="15" y="164" width="1" height="1"/><rect x="26" y="164" width="1" height="1"/>
<rect x="15" y="175.5" width="1" height="1"/><rect x="26" y="175.5" width="1" height="1"/>
</g>
<g stroke="#d2cfbf" stroke-width="0.8"><path d="M4 107.2h25 M4 146.3h25 M4 166.6h25 M4 187.4h25 M4 210.4h25 M4 223.4h25 M4 232.8h25"/></g>
<!-- marquee -->
<rect x="8.2" y="80.5" width="6.5" height="5.5" fill="none" stroke="#444" stroke-width="0.8" stroke-dasharray="1.2 1"/>
<!-- move -->
<path d="M18.6 80v4.5l1.2-1 1.2 1.8 0.8-0.4-1.1-1.7 1.7-0.1z" fill="#111"/>
<path d="M23.5 81.5v5 M21 84h5" stroke="#555" stroke-width="1"/>
<!-- lasso -->
<ellipse cx="11.5" cy="91.2" rx="3.4" ry="2" fill="none" stroke="#555" stroke-width="0.9"/>
<path d="M9 92.8q-0.6 1.5 0.5 2.5" fill="none" stroke="#555" stroke-width="0.8"/>
<!-- magic wand -->
<path d="M21 90.3l4.6 4.6" stroke="#333" stroke-width="1.1"/>
<circle cx="20.6" cy="90" r="1.3" fill="#999"/>
<!-- crop -->
<path d="M9.5 98.5v5h5" fill="none" stroke="#333" stroke-width="1.1"/>
<rect x="10.5" y="99.5" width="3.5" height="3" fill="#777"/>
<path d="M8.5 100.5h5v4" fill="none" stroke="#444" stroke-width="0.8"/>
<!-- slice -->
<path d="M19 104l6-5.5 0.8 0.8-4 4.3z" fill="#666"/>
<!-- healing -->
<path d="M8 115l6-6" stroke="#777" stroke-width="3" stroke-linecap="round"/>
<path d="M8 115l6-6" stroke="#ddd" stroke-width="1" stroke-linecap="round"/>
<!-- brush -->
<path d="M19.5 115.5q1.5 0 2.2-1.5l4.3-4.5" fill="none" stroke="#333" stroke-width="1"/>
<!-- stamp -->
<path d="M10.5 119h2v2.5h2.5v2.5h-7v-2.5h2.5z" fill="#555"/>
<rect x="8" y="124.3" width="7" height="1.2" fill="#999"/>
<!-- history brush -->
<path d="M19.5 125.5q1 -0.3 1.8-1.5l4.5-4.5" fill="none" stroke="#555" stroke-width="1"/>
<path d="M20 121.5q1.5-2 3-1" fill="none" stroke="#777" stroke-width="0.7"/>
<!-- eraser -->
<path d="M8 133l5-4.2 1.6 1.6-5 4.2z" fill="#888"/>
<!-- gradient -->
<rect x="19" y="129" width="7" height="5" fill="url(#gw)"/>
<!-- blur -->
<path d="M10.8 137.5q-2.4 3-2.4 4.2a2.4 2.2 0 0 0 4.8 0q0-1.2-2.4-4.2z" fill="#aaa" stroke="#777" stroke-width="0.5"/>
<!-- dodge -->
<ellipse cx="21.5" cy="139.8" rx="2.2" ry="1.8" fill="#111"/>
<path d="M23 141l2.8 2.8" stroke="#333" stroke-width="0.9"/>
<!-- path selection -->
<path d="M9 149l3.6 3.5-1.5 0.3 0.9 2-0.8 0.4-0.9-2-1.3 1z" fill="#111"/>
<!-- type (selected) -->
<rect x="17.5" y="148.2" width="10" height="8.3" fill="#fff" stroke="#b8c4d8" stroke-width="0.6"/>
<path d="M19.5 149.6h5.8v1.8h-0.5l-0.4-1h-1.6v4.5l0.8 0.3v0.4h-2.7v-0.4l0.8-0.3v-4.5h-1.6l-0.4 1h-0.5z" fill="#111"/>
<!-- pen -->
<path d="M10.6 157.8q-1.8 2.5-1.8 4q0 1.6 1.8 2.2q1.8-0.6 1.8-2.2q0-1.5-1.8-4z" fill="#666"/>
<circle cx="10.6" cy="161.7" r="0.6" fill="#fff"/>
<!-- rectangle -->
<rect x="19.5" y="158.6" width="6" height="5.4" fill="url(#gg)" stroke="#777" stroke-width="0.5"/>
<!-- notes -->
<path d="M8.7 169.2h5.3v4.5l-2 2h-3.3z" fill="#ccc" stroke="#666" stroke-width="0.6"/>
<path d="M9.7 171h3 M9.7 172.5h3" stroke="#777" stroke-width="0.5"/>
<!-- eyedropper -->
<path d="M19.8 175.4l4-4.3" stroke="#666" stroke-width="1"/>
<path d="M23.3 171.8l1.8-2.6 0.8 0.8-2.2 2.2z" fill="#222"/>
<!-- hand -->
<path d="M9 181q0-1.5 1-1.3v-0.8q0.5-0.6 1.2 0q0.6-0.6 1.2 0q0.7-0.3 1.1 0.4v1.2q0.8-0.3 1 0.5l-0.4 2.8q-0.6 2-2.4 2q-1.6 0-2.3-1.8z" fill="#bbb" stroke="#777" stroke-width="0.5"/>
<!-- zoom -->
<circle cx="21.3" cy="181" r="1.9" fill="#eee" stroke="#444" stroke-width="0.9"/>
<path d="M22.7 182.5l2.8 2.9" stroke="#222" stroke-width="1.3"/>
<!-- masks -->
<rect x="7.7" y="213" width="8.2" height="8" fill="#fff" stroke="#aab" stroke-width="0.5"/>
<rect x="9.2" y="214.7" width="5" height="4.5" rx="1.2" fill="none" stroke="#555" stroke-width="0.9"/>
<rect x="18" y="214" width="8" height="6.3" fill="#555"/>
<rect x="18" y="214" width="8" height="6.3" fill="url(#gw)" opacity="0.3"/>
<ellipse cx="21.6" cy="217.1" rx="1.8" ry="1.6" fill="#fff"/>
<!-- screen modes -->
<rect x="7.8" y="225.8" width="4.8" height="5.2" fill="#5a9ae0" stroke="#666" stroke-width="0.4"/>
<rect x="9" y="227.8" width="3" height="2" fill="#e05030"/>
<rect x="14.3" y="226" width="4.8" height="5" fill="#8a8a8a" stroke="#555" stroke-width="0.4"/>
<rect x="15" y="227.3" width="3.4" height="2.4" fill="#bbb"/>
<rect x="20.8" y="226" width="4.8" height="5" fill="#9a9a9a" stroke="#555" stroke-width="0.4"/>
<!-- jump to IR -->
<path d="M8 236.5q0-1.3 1.5-1.3h3q1 0 1 1v5q0 1.3-1.5 1.3h-2.5q-1.5 0-1.5-1.3z" fill="#999" stroke="#333" stroke-width="0.6"/>
<rect x="8" y="235.5" width="6" height="1.5" fill="#333"/>
<path d="M13.8 237.5h1.7v-1.3l2.3 2.3-2.3 2.3v-1.3h-1.7z" fill="#222"/>
<path d="M18.5 236.5l4.5-1.5 1.5 5-2.5 2z" fill="#888" stroke="#555" stroke-width="0.5"/>
<path d="M22 236l1.5 4" stroke="#eee" stroke-width="0.6"/>
</svg>
<div class="a" style="left:13px;top:196.5px;width:11px;height:11.5px;background:#c8f4fb;border:0.5px solid #d8d8cc"></div>
<div class="a" style="left:8px;top:191.5px;width:10.5px;height:10px;background:#ffc400;border:0.5px solid #b08800"></div>
<div class="a" style="left:8.5px;top:204.5px;width:2.8px;height:2.8px;background:#000;box-shadow:1px 1px 0 #fff,1.5px 1.5px 0 #888"></div>
<svg class="a" style="left:20px;top:189.5px" width="6" height="6" viewBox="0 0 6 6"><path d="M1 1.5q3 0 3 3 M0.5 1.5l1.3-1 M0.5 1.5l1.3 1 M4 5l-1-1.2 M4 5l1-1.2" fill="none" stroke="#222" stroke-width="0.7"/></svg>

<!-- status bar -->
<div class="a" style="left:0;top:413.6px;width:807px;height:0.8px;background:#d4d2ca"></div>
<div class="a" style="left:1px;top:415px;width:18px;height:5.5px;background:#fff"></div>
<div class="t" style="left:2.6px;top:415.8px;font-size:4.3px;color:#111">100%</div>
<div class="a" style="left:20px;top:415px;width:1px;height:6px;background:#c8c5b8"></div>
<svg class="a" style="left:21px;top:414px" width="8" height="7" viewBox="0 0 8 7"><circle cx="3.8" cy="3.5" r="2.4" fill="#d8d8d8" stroke="#777" stroke-width="0.6"/><path d="M3.2 2.2l2 1.8-1 0.2 0.6 1" stroke="#222" stroke-width="0.6" fill="none"/></svg>
<div class="a" style="left:29px;top:415px;width:1px;height:6px;background:#c8c5b8"></div>
<div class="t" style="left:46px;top:416px;font-size:4.1px;color:#222">Doc: 482,2K/941,0K</div>
<div class="a" style="left:103px;top:415.6px;width:2.6px;height:4.2px;background:#111;clip-path:polygon(0 0,100% 50%,0 100%)"></div>
<div class="a" style="left:107px;top:414.5px;width:694px;height:6.5px;background:#f9f9f5"></div>
<div class="a" style="left:107.5px;top:414.8px;width:6.5px;height:5.6px;border:0.5px solid #e6e4dc;border-radius:1px;background:#f6f6f2"></div><svg class="a" style="left:107px;top:414px" width="8" height="7" viewBox="0 0 8 7"><path d="M4.6 2.3l-1.3 1.3 1.3 1.3" fill="none" stroke="#c0c0b8" stroke-width="0.6"/></svg>
<div class="a" style="left:801px;top:414.5px;width:6px;height:6.5px;background:#ece9d8"></div>
<svg class="a" style="left:790px;top:405px" width="17" height="16" viewBox="790 405 17 16">
<rect x="801.3" y="407.8" width="5.2" height="5.5" rx="0.8" fill="none" stroke="#e0ddd0" stroke-width="0.5"/>
<path d="M802.6 409.8l1.3 1.3 1.3-1.3" fill="none" stroke="#bbb" stroke-width="0.6"/>
<rect x="793.5" y="415" width="6.5" height="5.2" rx="0.8" fill="none" stroke="#e0ddd0" stroke-width="0.5"/>
<path d="M796.3 416.3l1.3 1.3-1.3 1.3" fill="none" stroke="#bbb" stroke-width="0.6"/>
<g fill="#c8c4b0"><rect x="805" y="416" width="0.8" height="0.8"/><rect x="805" y="418" width="0.8" height="0.8"/><rect x="803" y="418" width="0.8" height="0.8"/></g>
</svg>
<svg class="a" style="left:800px;top:57px" width="7" height="9" viewBox="800 57 7 9">
<path d="M802.4 61.5l1.3-1.3 1.3 1.3" fill="none" stroke="#bbb" stroke-width="0.6"/>
</svg>

<!-- taskbar -->
<div class="a" style="left:0;top:421px;width:40px;height:12px;border-radius:0 3px 3px 0;background:linear-gradient(#3c9c3c 0,#4ab04a 15%,#379937 50%,#2e8a2e 85%,#2a7a2a 100%)"></div>
<svg class="a" style="left:3px;top:422px" width="10" height="10" viewBox="0 0 10 10">
<path d="M2.2 1.6q1.5-0.6 3.2 0.2l-0.6 2.8q-1.6-0.7-3.2-0.1z" fill="#f05a22"/>
<path d="M5.8 1.9q1.6 0.7 3.2 0.1l-0.6 2.8q-1.6 0.6-3.2-0.1z" fill="#6cc02a"/>
<path d="M1.5 4.9q1.6-0.6 3.2 0.1l-0.6 2.8q-1.6-0.7-3.2-0.1z" fill="#3a8ef0"/>
<path d="M5.1 5.2q1.6 0.7 3.2 0.1l-0.6 2.8q-1.6 0.6-3.2-0.1z" fill="#f8c820"/>
</svg>
<div class="t" style="left:14.6px;top:424.2px;font-size:6.4px;color:#fff;font-weight:bold;text-shadow:0.3px 0.3px 0.3px #1a5a1a;transform:skewX(-10deg)">пуск</div>
<svg class="a" style="left:44px;top:421px" width="74" height="12" viewBox="44 421 74 12">
<circle cx="47.5" cy="425.5" r="1.5" fill="#9a8a70"/><circle cx="50" cy="426" r="1.3" fill="#6a6050"/>
<path d="M45.8 430q0-2.5 1.8-2.5t1.8 2.5z M48.5 430.3q0-2.3 1.5-2.3t1.5 2.3z" fill="#887860"/>
<rect x="55.3" y="423.8" width="5.8" height="5.8" rx="2.2" fill="#2aa4e4"/>
<path d="M56.5 426.6l3.5-1.4-0.7 3.3-1.2-0.9z" fill="#fff"/>
<rect x="64.6" y="423.5" width="6" height="6.2" rx="0.8" fill="#e8f0f8" stroke="#5a8ad8" stroke-width="0.5"/>
<circle cx="67.4" cy="426.6" r="1.9" fill="none" stroke="#3a7ad8" stroke-width="0.8"/>
<rect x="69.6" y="423.5" width="1.2" height="2" fill="#d04040"/>
<path d="M77.6 424q-2.8 0-2.8 2.7t2.8 2.8q1.8 0 2.5-1.3h-1.2q-0.5 0.5-1.3 0.5-1.4 0-1.6-1.3h4.1q0.1-0.3 0.1-0.7 0-2.7-2.6-2.7z M76.1 426.3q0.2-1.2 1.5-1.2t1.4 1.2z" fill="#2a8ae8"/>
<path d="M74.2 424.8q3.5-2.5 6.6-0.6" fill="none" stroke="#f0c020" stroke-width="0.5"/>
<circle cx="86.9" cy="426.6" r="3" fill="#e8402a"/>
<path d="M86.9 426.6l-2.6 1.5a3 3 0 0 0 2.6 1.5z" fill="#30a040"/>
<path d="M86.9 426.6l2.6 1.5a3 3 0 0 1-2.6 1.5z" fill="#f8c820"/>
<circle cx="86.9" cy="426.6" r="1.3" fill="#3a80e8" stroke="#fff" stroke-width="0.6"/>
<path d="M94 429.5q0-4 2-5l1 1.2 1-1.2 1 1.2 1-1q1 2 0 4.8z" fill="#8a5a28"/>
<circle cx="96.3" cy="426.5" r="0.5" fill="#fff"/><circle cx="98.3" cy="426.5" r="0.5" fill="#fff"/>
<path d="M111.8 423.5l0.8 0.8-0.8 0.8 M113.2 423.5l0.8 0.8-0.8 0.8" fill="none" stroke="#c8d8f8" stroke-width="0.5"/>
</svg>
<div class="task" style="left:118px;width:66px">The Old Net - Microso...</div>
<svg class="a" style="left:121px;top:422px" width="9" height="9" viewBox="0 0 9 9"><path d="M2.5 1.3h3.3l1.5 1.5v5.5h-4.8z" fill="#f4f4f0" stroke="#aab" stroke-width="0.4"/><path d="M4.3 3.2q-2 0-2 1.8t2 1.9q1.2 0 1.7-0.9h-0.9q-0.3 0.3-0.8 0.3-0.9 0-1-0.8h2.8q0-2.3-1.8-2.3z" fill="#2a7ad8"/><path d="M1.2 3.5q2.5-2 5.5-0.8" fill="none" stroke="#e8a020" stroke-width="0.5"/></svg>
<div class="task" style="left:186px;width:66px">ChromeXP V1.0</div>
<svg class="a" style="left:189px;top:423px" width="8" height="7" viewBox="0 0 8 7"><path d="M0.8 1.2h2.4l0.7 0.8h3.3v4.2h-6.4z" fill="#e8b840"/><path d="M0.8 2.8h6.6l-0.4 3.4h-6.2z" fill="#f8dc70"/></svg>
<div class="task" style="left:253px;width:66px">Новая вкладка - Ch...</div>
<svg class="a" style="left:256px;top:423px" width="8" height="8" viewBox="0 0 8 8"><circle cx="4" cy="4" r="2.8" fill="none" stroke="#e8eef8" stroke-width="1.1"/><circle cx="4" cy="4" r="1.1" fill="#cfe0f8"/><path d="M4 1.2v2" stroke="#e8eef8" stroke-width="0.8"/></svg>
<div class="task" style="left:320px;width:66px">FL Studio</div>
<svg class="a" style="left:323px;top:423px" width="8" height="8" viewBox="0 0 8 8"><circle cx="4" cy="4" r="3" fill="#222"/><path d="M4 1.3q1.8 1.2 1.6 3.4-0.4 1.8-1.6 2.1z" fill="#f8a020"/><path d="M4 1.3q-1.6 1.4-1.4 3.2 0.3 1.8 1.4 2.3z" fill="#8cc040"/><path d="M3.2 1l0.8 1 0.9-1" fill="none" stroke="#6a4" stroke-width="0.5"/></svg>
<div class="task" style="left:387px;width:67px;background:#1e4fc0;box-shadow:inset 1px 1px 1px #16389a">Adobe Photoshop - [L...</div>
<svg class="a" style="left:391px;top:423.5px" width="8" height="8" viewBox="0 0 8 8"><circle cx="3.5" cy="3.6" r="2.9" fill="#e8f2f8" stroke="#a8c8e0" stroke-width="0.4"/><path d="M1 4.4q1.5-2.4 4.3-1.3-1.3 0.2-2 2.6-1.1-0.3-2.3-1.3z" fill="#2a9a5a"/><path d="M3.1 5.6q0.8-2.2 2.4-2.4 0.7 1.5-0.4 2.8z" fill="#2a6ac8"/></svg>
<div class="t" style="left:629.8px;top:425.3px;font-size:4.7px;color:#e8f0ff">RU</div>
<div class="a" style="left:642px;top:422.5px;width:53px;height:9px;background:#fff;border:0.5px solid #7a9ad8"></div>
<div class="t" style="left:644.3px;top:425.4px;font-size:4.5px;color:#9a9a9a">Поиск в Интернете</div>
<div class="a" style="left:695px;top:422.5px;width:11px;height:9px;background:linear-gradient(#f4f4f0,#d8d8d0);border:0.5px solid #7a9ad8"></div>
<svg class="a" style="left:696px;top:423px" width="9" height="8" viewBox="0 0 9 8"><circle cx="5" cy="3.2" r="1.9" fill="#dbe8fa" stroke="#3a6ad0" stroke-width="0.8"/><path d="M3.6 4.6l-1.8 1.8" stroke="#2a4ab0" stroke-width="1"/></svg>
<div class="a" style="left:715px;top:421px;width:92px;height:12px;background:linear-gradient(#1a9af8 0,#14a0f0 10%,#0c8ae8 30%,#0c88e6 80%,#0a78d8 100%);border-left:1px solid #0a5ac8"></div>
<svg class="a" style="left:716px;top:421px" width="74" height="12" viewBox="716 421 74 12">
<path d="M720.2 424.8l2.65-0.6 2.65 0.6v2.2q0 1.8-2.65 2.9-2.65-1.1-2.65-2.9z" fill="#f0d020" stroke="#b09010" stroke-width="0.4"/>
<path d="M722.85 425.3v2.5" stroke="#7a6a10" stroke-width="0.6"/>
<circle cx="730.5" cy="427.1" r="3.1" fill="#2a9a4a" stroke="#d8f0d8" stroke-width="0.5"/>
<path d="M729.3 425.3v2.3q0 1 1.2 1t1.2-1v-2.3" fill="none" stroke="#fff" stroke-width="0.8"/>
<circle cx="738.3" cy="427.1" r="2.8" fill="#fff" stroke="#3a6ad0" stroke-width="0.7"/>
<path d="M739.5 425.6q-2.2-0.6-2.2 1.5t2.2 1.5" fill="none" stroke="#2a5ac0" stroke-width="0.8"/>
<circle cx="746.3" cy="425.6" r="1.8" fill="#e8eef8" stroke="#bcd" stroke-width="0.4"/>
<path d="M745 427l-1.8 2.3" stroke="#2040c0" stroke-width="0.9"/>
<rect x="750.2" y="423.6" width="2.2" height="3" fill="#5a9a3a"/><rect x="752.6" y="424.6" width="2.2" height="3" fill="#3a7ad8"/>
<circle cx="754.7" cy="428.7" r="1.6" fill="#e04040"/>
<rect x="757.8" y="424.2" width="5" height="4.6" fill="#b0b0b0" stroke="#666" stroke-width="0.4"/><rect x="758.5" y="425" width="3.6" height="2" fill="#ddd"/>
<circle cx="767.6" cy="426.8" r="2.6" fill="#7a7a7a" stroke="#555" stroke-width="0.4"/>
<path d="M767.5 429.5l2.6-2.6" stroke="#6aa0f0" stroke-width="0.6"/>
<path d="M772.2 425.2l1.8-1.5 1.8 1.5v1h-3.6z" fill="#3aaa3a"/>
<ellipse cx="774.5" cy="428.3" rx="2.4" ry="1.5" fill="#8a8a8a"/>
<rect x="780" y="423.8" width="6.5" height="6.5" fill="#e02020"/>
<rect x="781" y="424.8" width="4.5" height="4.5" rx="1" fill="#f0f0f0"/>
<path d="M783.8 424.6l-2 2.6h1.4l-1 2.6 2.4-3h-1.4z" fill="#e02020"/>
</svg>
<div class="t" style="left:789.7px;top:424.8px;font-size:4.4px;color:#f0f8ff">23:50</div>
</body></html>
